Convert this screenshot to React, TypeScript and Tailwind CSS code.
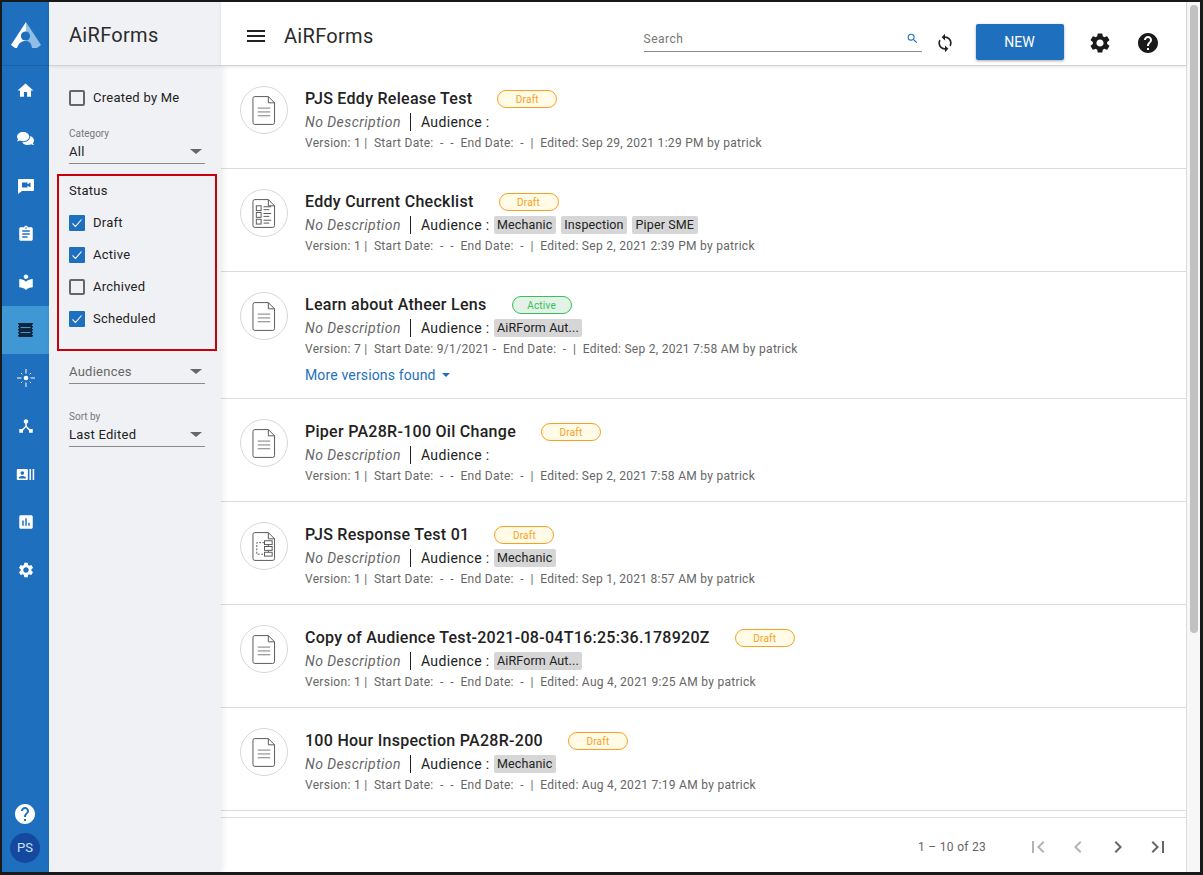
import React from "react";
import { FaComments } from "react-icons/fa";
import {
  MdAssessment,
  MdAssignment,
  MdChevronLeft,
  MdChevronRight,
  MdDeviceHub,
  MdFirstPage,
  MdHelp,
  MdHome,
  MdLastPage,
  MdLocalLibrary,
  MdMenu,
  MdRecentActors,
  MdSearch,
  MdSettings,
  MdSync,
} from "react-icons/md";

type DocKind = "doc" | "checklist" | "flow";

interface RowData {
  title: string;
  status: "Draft" | "Active";
  kind: DocKind;
  tags: string[];
  version: number;
  start?: string;
  edited: string;
  more?: boolean;
}

const rows: RowData[] = [
  { title: "PJS Eddy Release Test", status: "Draft", kind: "doc", tags: [], version: 1, edited: "Sep 29, 2021 1:29 PM" },
  { title: "Eddy Current Checklist", status: "Draft", kind: "checklist", tags: ["Mechanic", "Inspection", "Piper SME"], version: 1, edited: "Sep 2, 2021 2:39 PM" },
  { title: "Learn about Atheer Lens", status: "Active", kind: "doc", tags: ["AiRForm Aut..."], version: 7, start: "9/1/2021", edited: "Sep 2, 2021 7:58 AM", more: true },
  { title: "Piper PA28R-100 Oil Change", status: "Draft", kind: "doc", tags: [], version: 1, edited: "Sep 2, 2021 7:58 AM" },
  { title: "PJS Response Test 01", status: "Draft", kind: "flow", tags: ["Mechanic"], version: 1, edited: "Sep 1, 2021 8:57 AM" },
  { title: "Copy of Audience Test-2021-08-04T16:25:36.178920Z", status: "Draft", kind: "doc", tags: ["AiRForm Aut..."], version: 1, edited: "Aug 4, 2021 9:25 AM" },
  { title: "100 Hour Inspection PA28R-200", status: "Draft", kind: "doc", tags: ["Mechanic"], version: 1, edited: "Aug 4, 2021 7:19 AM" },
];

const Logo = () => (
  <svg width="30" height="26" viewBox="0 0 30 26" className="mt-[3px]">
    <path d="M15 0 L0 23 L4 26 L15 26 Z" fill="#ffffff" />
    <path d="M15 0 L30 23 L26 26 L15 26 Z" fill="#8fbfe6" />
    <circle cx="14.5" cy="14" r="4.6" fill="#1f6fbf" />
    <path d="M6 26 C8 20.5 11 19 14.5 19 C18 19 20 20.5 21 26 Z" fill="#1f6fbf" />
  </svg>
);

const VideoChatIcon = () => (
  <svg width="18" height="18" viewBox="0 0 18 18">
    <path d="M2 2H16A1 1 0 0 1 17 3V13A1 1 0 0 1 16 14H5L1 17V3A1 1 0 0 1 2 2Z" fill="#ffffff" />
    <path d="M5 5.5H10.5V7.3L13.5 5.5V10.5L10.5 8.7V10.5H5Z" fill="#1f6fbf" />
  </svg>
);

const BurstIcon = () => (
  <svg width="18" height="18" viewBox="0 0 18 18" fill="none" stroke="#ffffff" strokeWidth="1">
    <circle cx="9" cy="9" r="2.3" fill="#ffffff" stroke="none" />
    <path d="M9 0v4.5M9 13.5v4.5M0 9h4.5M13.5 9h4.5" />
    <path d="M4 4l1.3 1.3M12.7 12.7l1.3 1.3M4 14l1.3-1.3M12.7 5.3l1.3-1.3" />
  </svg>
);

const FormsIcon = () => (
  <svg width="15" height="14" viewBox="0 0 15 14">
    <rect x="1" y="0" width="13" height="14" fill="#10263f" />
    <path d="M2.5 4.5h10M2.5 9.5h10" stroke="#3f97d4" strokeWidth="1" />
    <path d="M0.5 0v14M14.5 0v14" stroke="#10263f" strokeWidth="1" strokeDasharray="1.5 1.5" />
  </svg>
);

const DocIcon = ({ kind }: { kind: DocKind }) => (
  <svg width="24" height="31" viewBox="0 0 25 32" fill="none" stroke="#555555" strokeWidth="1">
    <path d="M3 1.5H17L23.5 8V28.5a2 2 0 0 1-2 2H3a2 2 0 0 1-2-2V3.5a2 2 0 0 1 2-2Z" />
    <path d="M17 1.5V8H23.5" />
    {kind === "doc" && <path d="M6 13.5H19M6 17.5H19M6 21.5H19" stroke="#777777" />}
    {kind === "checklist" && (
      <>
        <rect x="4.5" y="8" width="5" height="5" />
        <rect x="4.5" y="15" width="5" height="5" />
        <rect x="4.5" y="22" width="5" height="5" />
        <path d="M12 9h8M12 12h6M12 16h8M12 19h6M12 23h8M12 26h6" />
      </>
    )}
    {kind === "flow" && (
      <>
        <rect x="13" y="10" width="8" height="4" />
        <rect x="13" y="16" width="8" height="4" />
        <rect x="13" y="22" width="8" height="4" />
        <path d="M13 12H5V24H13" strokeDasharray="2 1.5" />
        <path d="M17 14v2M17 20v2" />
      </>
    )}
  </svg>
);

const Check = ({ checked, label }: { checked?: boolean; label: string }) => (
  <div className="flex h-4 items-center gap-2">
    {checked ? (
      <span className="flex h-4 w-4 items-center justify-center rounded-[1px] bg-[#1f6fbf]">
        <svg width="12" height="12" viewBox="0 0 12 12" fill="none" stroke="#ffffff" strokeWidth="1.1">
          <path d="M1.5 6.5 L4.5 9.5 L10.5 2.5" />
        </svg>
      </span>
    ) : (
      <span className="h-4 w-4 rounded-[2px] border-2 border-[#666666]" />
    )}
    <span className="text-[13px] tracking-[0.25px] text-[#222222]">{label}</span>
  </div>
);

const Select = ({ label, value, muted }: { label?: string; value: string; muted?: boolean }) => (
  <div className="w-[136px]">
    {label && <div className="h-[12px] text-[10px] leading-[12px] text-[#777777]">{label}</div>}
    <div className="flex h-[24px] items-center justify-between border-b border-[#8a8a8a] pr-[3px]">
      <span className={`text-[13px] tracking-[0.25px] ${muted ? "text-[#666666]" : "text-[#222222]"}`}>{value}</span>
      <span className="h-0 w-0 border-x-[6px] border-t-[5px] border-x-transparent border-t-[#666666]" />
    </div>
  </div>
);

const Rail = () => {
  const items = [
    <MdHome size={19} />,
    <FaComments size={17} />,
    <VideoChatIcon />,
    <MdAssignment size={18} />,
    <MdLocalLibrary size={18} />,
    <FormsIcon />,
    <BurstIcon />,
    <MdDeviceHub size={18} />,
    <MdRecentActors size={19} />,
    <MdAssessment size={18} />,
    <MdSettings size={18} />,
  ];
  return (
    <div className="flex w-[47px] shrink-0 flex-col bg-[#1f6fbf] text-white">
      <div className="flex h-[64px] items-center justify-center border-b border-[#1b62a8]">
        <Logo />
      </div>
      {items.map((icon, i) => (
        <div key={i} className={`flex h-[48px] items-center justify-center ${i === 5 ? "bg-[#3f97d4]" : ""}`}>
          {icon}
        </div>
      ))}
      <div className="mt-auto flex flex-col items-center gap-[7px] pb-[9px]">
        <MdHelp size={24} className="-ml-[1px]" />
        <div className="-ml-[1px] flex h-[30px] w-[30px] items-center justify-center rounded-full bg-[#14499f] text-[13px] text-[#cfe0f5]">
          PS
        </div>
      </div>
    </div>
  );
};

const Filters = () => (
  <div className="z-10 flex w-[172px] shrink-0 flex-col bg-[#f0f1f5] shadow-[2px_0_6px_rgba(0,0,0,0.08)]">
    <div className="flex h-[64px] items-center border-b border-[#cfd2d6] pl-[20px] pt-[3px] text-[20px] tracking-[0.3px] text-[#2b2b2b] shadow-[0_1px_3px_rgba(0,0,0,0.08)]">
      AiRForms
    </div>
    <div className="pl-[20px] pt-[24px]">
      <Check label="Created by Me" />
    </div>
    <div className="pl-[20px] pt-[22px]">
      <Select label="Category" value="All" />
    </div>
    <div className="ml-[8px] mt-[10px] flex h-[177px] w-[160px] flex-col border-2 border-[#c8000a] pl-[10px] pt-[7px]">
      <div className="h-[16px] text-[13px] leading-[16px] tracking-[0.25px] text-[#222222]">Status</div>
      <div className="mt-[16px] flex flex-col gap-[16px]">
        <Check checked label="Draft" />
        <Check checked label="Active" />
        <Check label="Archived" />
        <Check checked label="Scheduled" />
      </div>
    </div>
    <div className="pl-[20px] pt-[9px]">
      <Select value="Audiences" muted />
    </div>
    <div className="pl-[20px] pt-[27px]">
      <Select label="Sort by" value="Last Edited" />
    </div>
  </div>
);

const FormRow = ({ row }: { row: RowData }) => (
  <div className="flex shrink-0 border-b border-[#dcdcdc] pl-[19px] pt-[20px]">
    <div className="flex h-[48px] w-[48px] shrink-0 items-center justify-center rounded-full border border-[#d8d8d8]">
      <DocIcon kind={row.kind} />
    </div>
    <div className={`ml-[17px] pt-[2px] ${row.more ? "pb-[11px]" : "pb-[17px]"}`}>
      <div className="flex h-[22px] items-center">
        <span className="text-[16px] font-medium tracking-[0.28px] text-[#222222]">{row.title}</span>
        {row.status === "Draft" ? (
          <span className="ml-[25px] flex h-[18px] w-[60px] items-center justify-center rounded-full border border-[#f7a024] bg-[#fffbe6] text-[10px] tracking-[0.2px] text-[#f7a024]">
            Draft
          </span>
        ) : (
          <span className="ml-[25px] flex h-[18px] w-[60px] items-center justify-center rounded-full border border-[#33c25a] bg-[#e3f1e6] text-[10px] tracking-[0.2px] text-[#33c25a]">
            Active
          </span>
        )}
      </div>
      <div className="mt-[1px] flex h-[22px] items-center">
        <span className="text-[14px] italic tracking-[0.45px] text-[#666666]">No Description</span>
        <span className="ml-[9px] h-[18px] w-px bg-[#222222]" />
        <span className="ml-[10px] text-[14px] tracking-[0.38px] text-[#222222]">Audience :</span>
        <span className="ml-[4px] flex gap-[5px]">
          {row.tags.map((t) => (
            <span key={t} className="flex h-[18px] items-center rounded-[2px] bg-[#d6d6d6] px-[3.5px] text-[12.5px] tracking-[0.12px] text-[#222222]">
              {t}
            </span>
          ))}
        </span>
      </div>
      <div className="mt-[2px] h-[16px] whitespace-pre text-[12px] leading-[16px] tracking-[0.29px] text-[#666666]">
        {`Version: ${row.version} |  Start Date: ${row.start ?? " - "} -  End Date:  -  |  Edited: ${row.edited} by patrick`}
      </div>
      {row.more && (
        <div className="mt-[6px] flex h-[24px] items-center gap-[6px] text-[14px] tracking-[0.15px] text-[#1f6fbf]">
          More versions found
          <span className="h-0 w-0 border-x-[4.5px] border-t-[4.5px] border-x-transparent border-t-[#1f6fbf]" />
        </div>
      )}
    </div>
  </div>
);

const Header = () => (
  <div className="z-10 flex h-[64px] shrink-0 items-center border-b border-[#cfd2d6] bg-white shadow-[0_1px_3px_rgba(0,0,0,0.1)]">
    <MdMenu size={24} className="ml-[23px] mt-[4px] text-[#222222]" />
    <span className="ml-[16px] mt-[4px] text-[20px] tracking-[0.3px] text-[#2b2b2b]">AiRForms</span>
    <div className="ml-[270px] mt-[11px] flex h-[26px] w-[278px] items-center justify-between border-b border-[#8a8a8a] pr-[3px]">
      <span className="text-[12px] tracking-[0.5px] text-[#777777]">Search</span>
      <MdSearch size={13} className="text-[#1f6fbf]" />
    </div>
    <MdSync size={20} className="ml-[13px] mt-[18px] text-[#222222]" />
    <div className="ml-[21px] mt-[17px] flex h-[36px] w-[88px] items-center justify-center rounded-[2px] bg-[#1f6fbf] text-[14px] text-white shadow-[0_1px_3px_rgba(0,0,0,0.35)]">
      NEW
    </div>
    <MdSettings size={24} className="ml-[24px] mt-[19px] text-[#1a1a1a]" />
    <MdHelp size={24} className="ml-[24px] mt-[19px] text-[#1a1a1a]" />
  </div>
);

const Pager = () => (
  <div className="flex h-[55px] shrink-0 items-center border-t border-[#dcdcdc] bg-white pt-[4px]">
    <span className="ml-[697px] w-[97px] text-[12px] tracking-[0.3px] text-[#666666]">1 – 10 of 23</span>
    <MdFirstPage size={24} className="ml-[11px] text-[#b3b3b3]" />
    <MdChevronLeft size={24} className="ml-[16px] text-[#b3b3b3]" />
    <MdChevronRight size={24} className="ml-[16px] text-[#666666]" />
    <MdLastPage size={24} className="ml-[16px] text-[#666666]" />
  </div>
);

export default function App() {
  return (
    <div className="flex h-[875px] w-[1203px] overflow-hidden bg-[#1a1a1a] pb-[3px] pl-[2px] pr-[3px] pt-[2px] [font-family:Roboto,sans-serif]">
      <Rail />
      <Filters />
      <div className="flex w-[966px] shrink-0 flex-col border-r border-[#dcdcdc] bg-white">
        <Header />
        <div className="flex min-h-0 flex-1 flex-col overflow-hidden">
          {rows.map((r) => (
            <FormRow key={r.title} row={r} />
          ))}
        </div>
        <Pager />
      </div>
      <div className="flex-1 bg-[#f7f7f7] pl-[3px] pr-[2px] pt-[3px]">
        <div className="h-[628px] rounded-full bg-[#c1c1c1]" />
      </div>
    </div>
  );
}
